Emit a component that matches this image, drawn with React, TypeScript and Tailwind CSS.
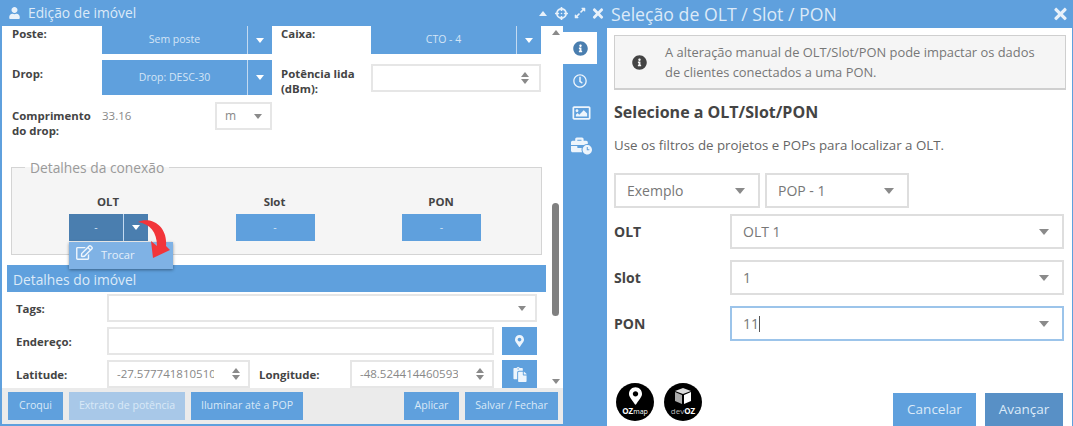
import React from "react";
import { FaUser, FaCrosshairs, FaExpandAlt, FaTimes, FaInfoCircle, FaRegClock, FaRegImage, FaBusinessTime, FaMapMarkerAlt, FaPaste, FaRegEdit } from "react-icons/fa";

const Caret = ({ className = "border-t-[#8a8a8a]" }: { className?: string }) => (
  <span className={"block w-0 h-0 border-x-[4.5px] border-x-transparent border-t-[5px] " + className} />
);
const BigCaret = () => (
  <span className="block w-0 h-0 border-x-[5.5px] border-x-transparent border-t-[6px] border-t-[#8a8a8a]" />
);
const CaretUp = ({ className = "border-b-[#8a8a8a]" }: { className?: string }) => (
  <span className={"block w-0 h-0 border-x-[4.5px] border-x-transparent border-b-[5px] " + className} />
);
const Spinner = () => (
  <span className="flex flex-col gap-[2px]">
    <CaretUp />
    <Caret />
  </span>
);

const SplitBtn = ({ label, h, w, dark, hideCaret }: { label: string; h: string; w: string; dark?: boolean; hideCaret?: boolean }) => (
  <div className={`flex text-[#d4e5f6] text-[10.5px] ${h} ${w} ${dark ? "bg-[#4a7eaf]" : "bg-[#5fa0dd]"}`}>
    <div className="flex-1 flex items-center justify-center">{label}</div>
    {!hideCaret && (
      <div className="w-[25px] border-l border-[#c3daf1] flex items-center justify-center">
        <Caret className="border-t-white" />
      </div>
    )}
  </div>
);

const Label = ({ children, className = "" }: { children: React.ReactNode; className?: string }) => (
  <div className={"font-bold text-[11.4px] leading-[15px] text-[#444] " + className}>{children}</div>
);

const Field = ({ value, className = "", right }: { value?: string; className?: string; right?: React.ReactNode }) => (
  <div className={"border-2 border-[#e6e6e6] bg-white flex items-center text-[11.5px] text-[#888] overflow-hidden " + className}>
    <span className="flex-1 min-w-0 overflow-hidden whitespace-nowrap pl-[8px]">{value}</span>
    {right}
  </div>
);

const Foot = ({ children, className = "" }: { children: React.ReactNode; className?: string }) => (
  <div className={"h-[28px] flex items-center justify-center text-[10.6px] text-[#d9e8f7] bg-[#5fa0dd] " + className}>{children}</div>
);

const Sel = ({ value, className = "", focused }: { value: React.ReactNode; className?: string; focused?: boolean }) => (
  <div className={`border-2 ${focused ? "border-[#9cc4ea]" : "border-[#dedede]"} bg-white h-[35px] flex items-center justify-between text-[14px] text-[#777] ` + className}>
    {value}
    <BigCaret />
  </div>
);

export default function App() {
  return (
    <div className="w-[1073px] h-[426px] flex overflow-hidden bg-[#5fa0dd] font-['Open_Sans',sans-serif]">
      {/* left window */}
      <div className="w-[607px] h-[426px] flex flex-col shrink-0">
        <div className="h-[26px] flex items-center pl-[9px] text-[#dceaf8] text-[13.8px] shrink-0">
          <FaUser className="w-[11px] h-[12px] text-[#e8f1fa]" />
          <span className="ml-[8px]">Edição de imóvel</span>
          <div className="ml-auto flex items-center pr-[3px] text-[#e8f1fa]">
            <CaretUp className="border-b-[#e8f1fa] mr-[8px]" />
            <FaCrosshairs className="w-[13px] h-[13px] mr-[6px]" />
            <FaExpandAlt className="w-[12px] h-[12px] mr-[6px]" />
            <FaTimes className="w-[12px] h-[15px]" />
          </div>
        </div>
        <div className="flex flex-1 min-h-0">
          <div className="w-[561px] ml-[2px] mb-[2px] flex flex-col bg-white relative shrink-0">
            <div className="flex flex-1 min-h-0">
              <div className="flex-1 min-w-0 overflow-hidden">
                {/* row 1 */}
                <div className="flex h-[28px]">
                  <Label className="w-[100px] pl-[10px]">Poste:</Label>
                  <SplitBtn label="Sem poste" h="h-[28px]" w="w-[170px]" />
                  <Label className="w-[99px] pl-[9px]">Caixa:</Label>
                  <SplitBtn label="CTO - 4" h="h-[28px]" w="w-[170px]" />
                </div>
                {/* row 2 */}
                <div className="flex mt-[6px] h-[35px]">
                  <Label className="w-[100px] pl-[10px] pt-[6px]">Drop:</Label>
                  <SplitBtn label="Drop: DESC-30" h="h-[35px]" w="w-[170px]" />
                  <Label className="w-[99px] pl-[9px] pt-[6px]">Potência lida (dBm):</Label>
                  <Field className="w-[170px] h-[28px] mt-[4px]" right={<span className="pr-[10px]"><Spinner /></span>} />
                </div>
                {/* row 3 */}
                <div className="flex mt-[7px] h-[28px]">
                  <Label className="w-[100px] pl-[10px] pt-[6px]">Comprimento do drop:</Label>
                  <div className="w-[113px] text-[11.5px] text-[#888] pt-[5px]">33.16</div>
                  <div className="w-[57px] h-[28px] border-2 border-[#e6e6e6] flex items-center justify-between pl-[8px] pr-[8px] text-[12px] text-[#888]">
                    m
                    <Caret />
                  </div>
                </div>
                {/* fieldset */}
                <fieldset className="ml-[9px] mt-[29px] w-[531px] h-[96px] border border-[#d4d4d4] bg-[#f5f5f5] pl-[13px] pr-0 relative">
                  <legend className="px-[5px] text-[13.8px] leading-[17px] text-[#9a9a9a]">Detalhes da conexão</legend>
                </fieldset>
                {/* details bar */}
                <div className="ml-[5px] mt-[10px] w-[539px] h-[27px] bg-[#5fa0dd] text-[#dceaf8] text-[13.8px] leading-[29px] pl-[6px]">Detalhes do imóvel</div>
                {/* tags */}
                <div className="flex items-center mt-[2px] h-[28px]">
                  <Label className="w-[105px] pl-[14px] pt-[1px]">Tags:</Label>
                  <Field className="w-[430px] h-[28px]" right={<span className="pr-[9px]"><Caret /></span>} />
                </div>
                <div className="flex items-center mt-[5px] h-[28px]">
                  <Label className="w-[105px] pl-[14px]">Endereço:</Label>
                  <Field className="w-[387px] h-[28px]" />
                  <div className="ml-[8px] w-[35px] h-[28px] bg-[#5fa0dd] flex items-center justify-center">
                    <FaMapMarkerAlt className="w-[9px] h-[12px] text-[#eef5fc]" />
                  </div>
                </div>
                <div className="flex items-center mt-[5px] h-[28px]">
                  <Label className="w-[105px] pl-[14px] pt-[1px]">Latitude:</Label>
                  <Field className="w-[143px] h-[28px]" value="-27.5777418105106" right={<span className="pl-[18px] pr-[8px]"><Spinner /></span>} />
                  <Label className="w-[100px] pl-[9px] pt-[1px]">Longitude:</Label>
                  <Field className="w-[144px] h-[28px]" value="-48.5244144605931" right={<span className="pl-[18px] pr-[8px]"><Spinner /></span>} />
                  <div className="ml-[8px] w-[35px] h-[28px] bg-[#5fa0dd] flex items-center justify-center">
                    <FaPaste className="w-[14px] h-[15px] text-[#eef5fc]" />
                  </div>
                </div>
              </div>
              {/* scrollbar */}
              <div className="w-[15px] flex flex-col items-center pt-[4px] pb-[5px]">
                <CaretUp />
                <div className="mt-[168px] w-[7px] h-[113px] rounded-[4px] bg-[#808080]" />
                <div className="mt-auto"><Caret /></div>
              </div>
            </div>
            {/* footer */}
            <div className="h-[36px] bg-[#ebebeb] flex items-center gap-[6px] pl-[6px] shrink-0 -mt-[1px]">
              <Foot className="w-[55px]">Croqui</Foot>
              <Foot className="w-[116px] bg-[#a8c8e8]!">Extrato de potência</Foot>
              <Foot className="w-[112px]">Iluminar até a POP</Foot>
              <Foot className="w-[55px] ml-[95px]">Aplicar</Foot>
              <Foot className="w-[93px]">Salvar / Fechar</Foot>
            </div>
            {/* connection fields over the fieldset */}
            <div className="absolute left-[67px] top-[163px] w-[412px] flex justify-between text-center">
              {[["OLT", true], ["Slot", false], ["PON", false]].map(([t, d]) => (
                <div key={t as string} className="w-[79px]">
                  <Label className="h-[25px] leading-[25px] pr-[1px]">{t as string}</Label>
                  {d ? (
                    <SplitBtn label="-" h="h-[27px]" w="w-[79px]" dark />
                  ) : (
                    <SplitBtn label="-" h="h-[27px]" w="w-[79px]" hideCaret />
                  )}
                </div>
              ))}
            </div>
            {/* dropdown */}
            <div className="absolute left-[67px] top-[216px] w-[104px] h-[27px] bg-[#7fb2e5] shadow-[0_1px_3px_rgba(0,0,0,0.4)] flex items-center pl-[7px] text-[11.2px] text-[#e4effa]">
              <FaRegEdit className="w-[17px] h-[15px] text-[#eef5fc] -mt-[6px]" />
              <span className="ml-[8px]">Trocar</span>
            </div>
            {/* red arrow */}
            <svg className="absolute left-[134px] top-[184px]" width="40" height="52" viewBox="0 0 40 52">
              <path d="M2 12 C14 6, 32 15, 30 36 L34 40 L17 48 L15 31 L21 36 C21 22, 14 14, 2 12Z" fill="#f2353a" />
            </svg>
          </div>
          {/* sidebar */}
          <div className="flex-1 flex flex-col pt-[6px]">
            <div className="w-[34px] h-[32px] bg-white flex items-center justify-center">
              <FaInfoCircle className="w-[15px] h-[15px] text-[#4a7eaf]" />
            </div>
            <div className="w-[34px] h-[33px] flex items-center justify-center text-[#eef5fc]"><FaRegClock className="w-[14px] h-[14px]" /></div>
            <div className="w-[36px] h-[32px] flex items-center justify-center text-[#eef5fc]"><FaRegImage className="w-[19px] h-[18px]" /></div>
            <div className="w-[36px] h-[33px] flex items-center justify-center text-[#eef5fc]"><FaBusinessTime className="w-[21px] h-[18px]" /></div>
          </div>
        </div>
      </div>
      {/* right window */}
      <div className="flex-1 flex flex-col min-w-0">
        <div className="h-[28px] flex items-center pl-[4px] pr-[5px] text-[17.7px] text-[#dceaf8] shrink-0 justify-between">
          <span>Seleção de OLT / Slot / PON</span>
          <FaTimes className="w-[15px] h-[18px] text-[#e8f1fa]" />
        </div>
        <div className="flex-1 bg-white pl-[7px] pr-[7px] pt-[7px] flex flex-col min-h-0 overflow-hidden mr-[1px]">
          <div className="w-[452px] h-[55px] shrink-0 border border-[#cfcfcf] border-b-2 bg-[#f5f5f5] flex items-center pl-[17px]">
            <FaInfoCircle className="w-[15px] h-[15px] text-[#444] shrink-0" />
            <p className="ml-[18px] text-[12.9px] leading-[20px] text-[#777]">A alteração manual de OLT/Slot/PON pode impactar os dados<br />de clientes conectados a uma PON.</p>
          </div>
          <h2 className="mt-[11px] text-[16px] leading-[22px] font-bold text-[#444]">Selecione a OLT/Slot/PON</h2>
          <p className="mt-[13px] text-[13.3px] leading-[18px] text-[#666]">Use os filtros de projetos e POPs para localizar a OLT.</p>
          <div className="flex gap-[5px] mt-[19px]">
            <Sel value="Exemplo" className="w-[146px] pl-[11px] pr-[13px]" />
            <Sel value="POP - 1" className="w-[144px] pl-[11px] pr-[13px]" />
          </div>
          {[["OLT", "OLT 1"], ["Slot", "1"], ["PON", "11"]].map(([l, v], i) => (
            <div key={l} className={`flex items-center ${i === 0 ? "mt-[6px]" : "mt-[11px]"}`}>
              <div className="w-[116px] font-bold text-[14px] text-[#444]">{l}</div>
              <Sel
                value={i === 2 ? <span className="border-r border-[#555] pr-0 leading-[16px]">{v}</span> : v}
                focused={i === 2}
                className="w-[334px] pl-[11px] pr-[13px]"
              />
            </div>
          ))}
          <div className="flex mt-auto justify-between items-end">
            <div className="flex gap-[10px] ml-[2px] mb-[5px]">
              <div className="w-[38px] h-[38px] rounded-full bg-black flex flex-col items-center text-white overflow-hidden">
                <FaMapMarkerAlt className="w-[13px] h-[18px] mt-[4px] shrink-0" />
                <span className="text-[8px] leading-[9px] mt-[1px] font-bold whitespace-nowrap">OZ<span className="font-normal text-[7px]">map</span></span>
              </div>
              <div className="w-[38px] h-[38px] rounded-full bg-black flex flex-col items-center text-white overflow-hidden">
                <svg className="mt-[5px] shrink-0" width="18" height="17" viewBox="0 0 18 17">
                  <path d="M9 0 L17 3 L9 6 L1 3 Z" fill="#ddd" />
                  <path d="M1 4 L8 7 L8 16 L1 13 Z" fill="#aaa" />
                  <path d="M10 7 L17 4 L17 13 L10 16 Z" fill="#fff" />
                </svg>
                <span className="text-[8px] leading-[9px] mt-[1px] text-[#bbb] whitespace-nowrap">dev<span className="font-bold text-white">OZ</span></span>
              </div>
            </div>
            <div className="flex gap-[9px] mr-[2px]">
              <div className="w-[83px] h-[33px] bg-[#5fa0dd] flex items-center justify-center text-[13.5px] text-[#dceaf8]">Cancelar</div>
              <div className="w-[78px] h-[33px] bg-[#5890c6] flex items-center justify-center text-[13.5px] text-[#dceaf8]">Avançar</div>
            </div>
          </div>
        </div>
      </div>
    </div>
  );
}
